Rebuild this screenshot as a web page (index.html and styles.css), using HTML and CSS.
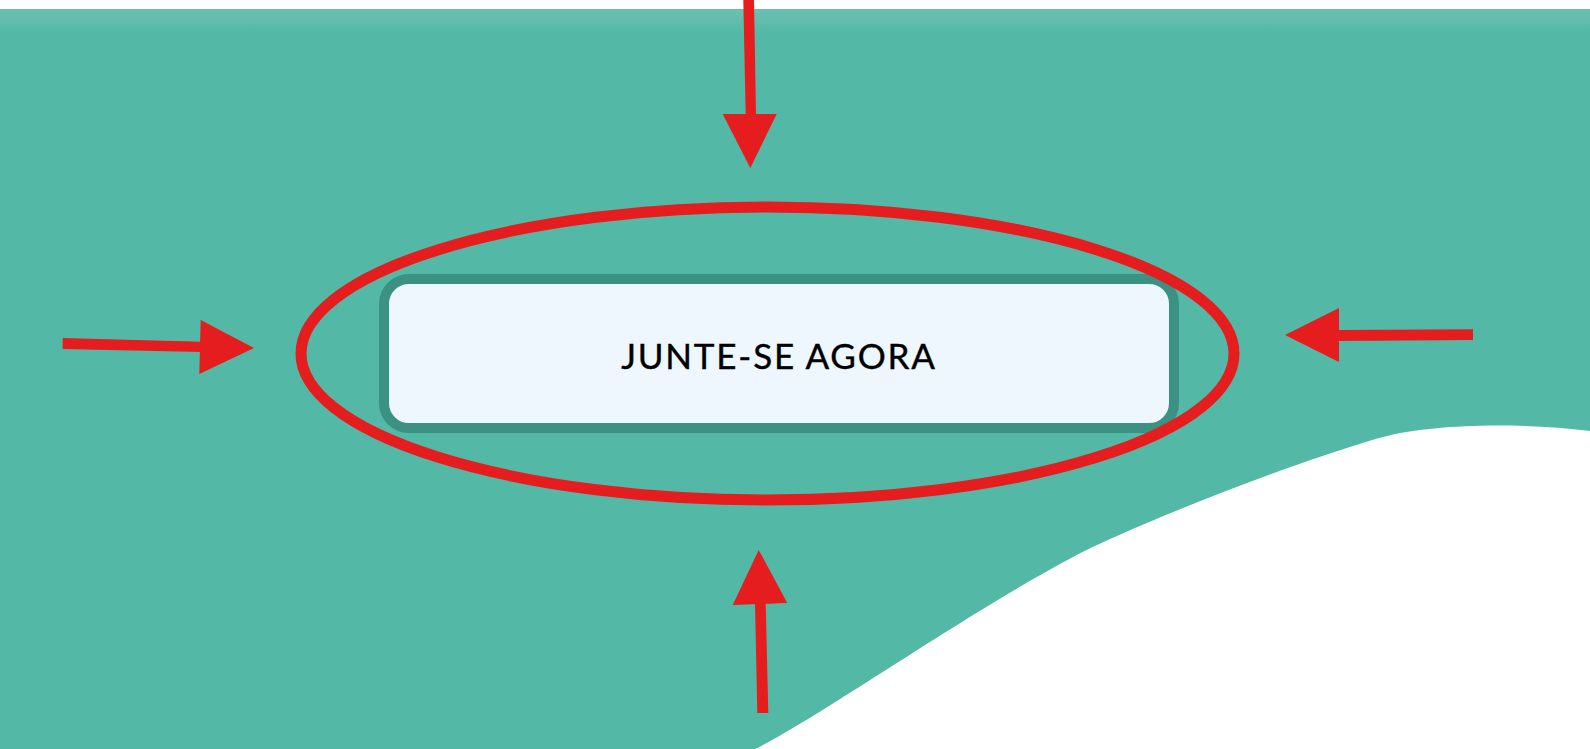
FILE: index.html
```html
<!DOCTYPE html>
<html lang="pt">
<head>
<meta charset="utf-8">
<title>Junte-se agora</title>
<link rel="stylesheet" href="styles.css">
</head>
<body>
<div class="page">
  <section class="hero">
    <svg class="wave" viewBox="0 0 1590 740" width="1590" height="740" aria-hidden="true">
      <path d="M755 740 C820 708 960 608 1073 548 C1133 516 1300 451 1383 428 C1430 415 1520 413 1590 422 L1590 740 Z" fill="#ffffff"/>
    </svg>
    <div class="cta-wrap">
      <a class="cta" href="#">JUNTE-SE AGORA</a>
    </div>
  </section>
  <svg class="annotations" viewBox="0 0 1590 749" width="1590" height="749" aria-hidden="true">
    <ellipse cx="767.5" cy="353.5" rx="466.5" ry="146.5" fill="none" stroke="#e51d1f" stroke-width="11"/>
    <!-- top arrow -->
    <polygon points="743.3,0 754,0 756,115 745.7,115" fill="#e51d1f"/>
    <polygon points="722.7,114 776.7,114 750.3,168" fill="#e51d1f"/>
    <!-- left arrow -->
    <polygon points="62.7,338 62.7,349 202,352 202,341.7" fill="#e51d1f"/>
    <polygon points="200.7,320 199.3,374 254,348" fill="#e51d1f"/>
    <!-- right arrow -->
    <polygon points="1338,330 1338,341 1473,340 1473,329.3" fill="#e51d1f"/>
    <polygon points="1339,308 1339,362 1285,335" fill="#e51d1f"/>
    <!-- bottom arrow -->
    <polygon points="755,603 765.7,603 768.3,713 757.3,713" fill="#e51d1f"/>
    <polygon points="732.7,605 787.3,603 758.7,550" fill="#e51d1f"/>
  </svg>
</div>
</body>
</html>
```
FILE: styles.css
```css
html, body {
  margin: 0;
  padding: 0;
  background: #ffffff;
}

body {
  font-family: Lato, "Open Sans", "Liberation Sans", sans-serif;
  width: 1590px;
  height: 749px;
  overflow: hidden;
}

.page {
  position: relative;
  width: 1590px;
  height: 749px;
  padding-top: 9px;
  box-sizing: border-box;
}

.hero {
  position: relative;
  height: 740px;
  background: linear-gradient(to bottom, #6cc1b1 0px, #53b8a6 24px, #53b8a6 100%);
  box-shadow: inset 0 1px 0 rgba(140, 170, 165, 0.35);
  overflow: hidden;
}

.wave {
  position: absolute;
  left: 0;
  top: 0;
  display: block;
}

.cta-wrap {
  position: relative;
  display: flex;
  padding-top: 265px;
  padding-left: 379px;
}

.cta {
  display: flex;
  align-items: center;
  justify-content: center;
  width: 800px;
  height: 159px;
  box-sizing: border-box;
  border: 10px solid #3b9283;
  border-radius: 30px;
  background: #eff7fe;
  color: #000000;
  font-size: 35px;
  font-weight: 400;
  letter-spacing: 1.8px;
  -webkit-text-stroke: 0.4px #000000;
  text-decoration: none;
  padding-top: 2px;
}

.annotations {
  position: absolute;
  left: 0;
  top: 0;
  display: block;
  pointer-events: none;
}
```
